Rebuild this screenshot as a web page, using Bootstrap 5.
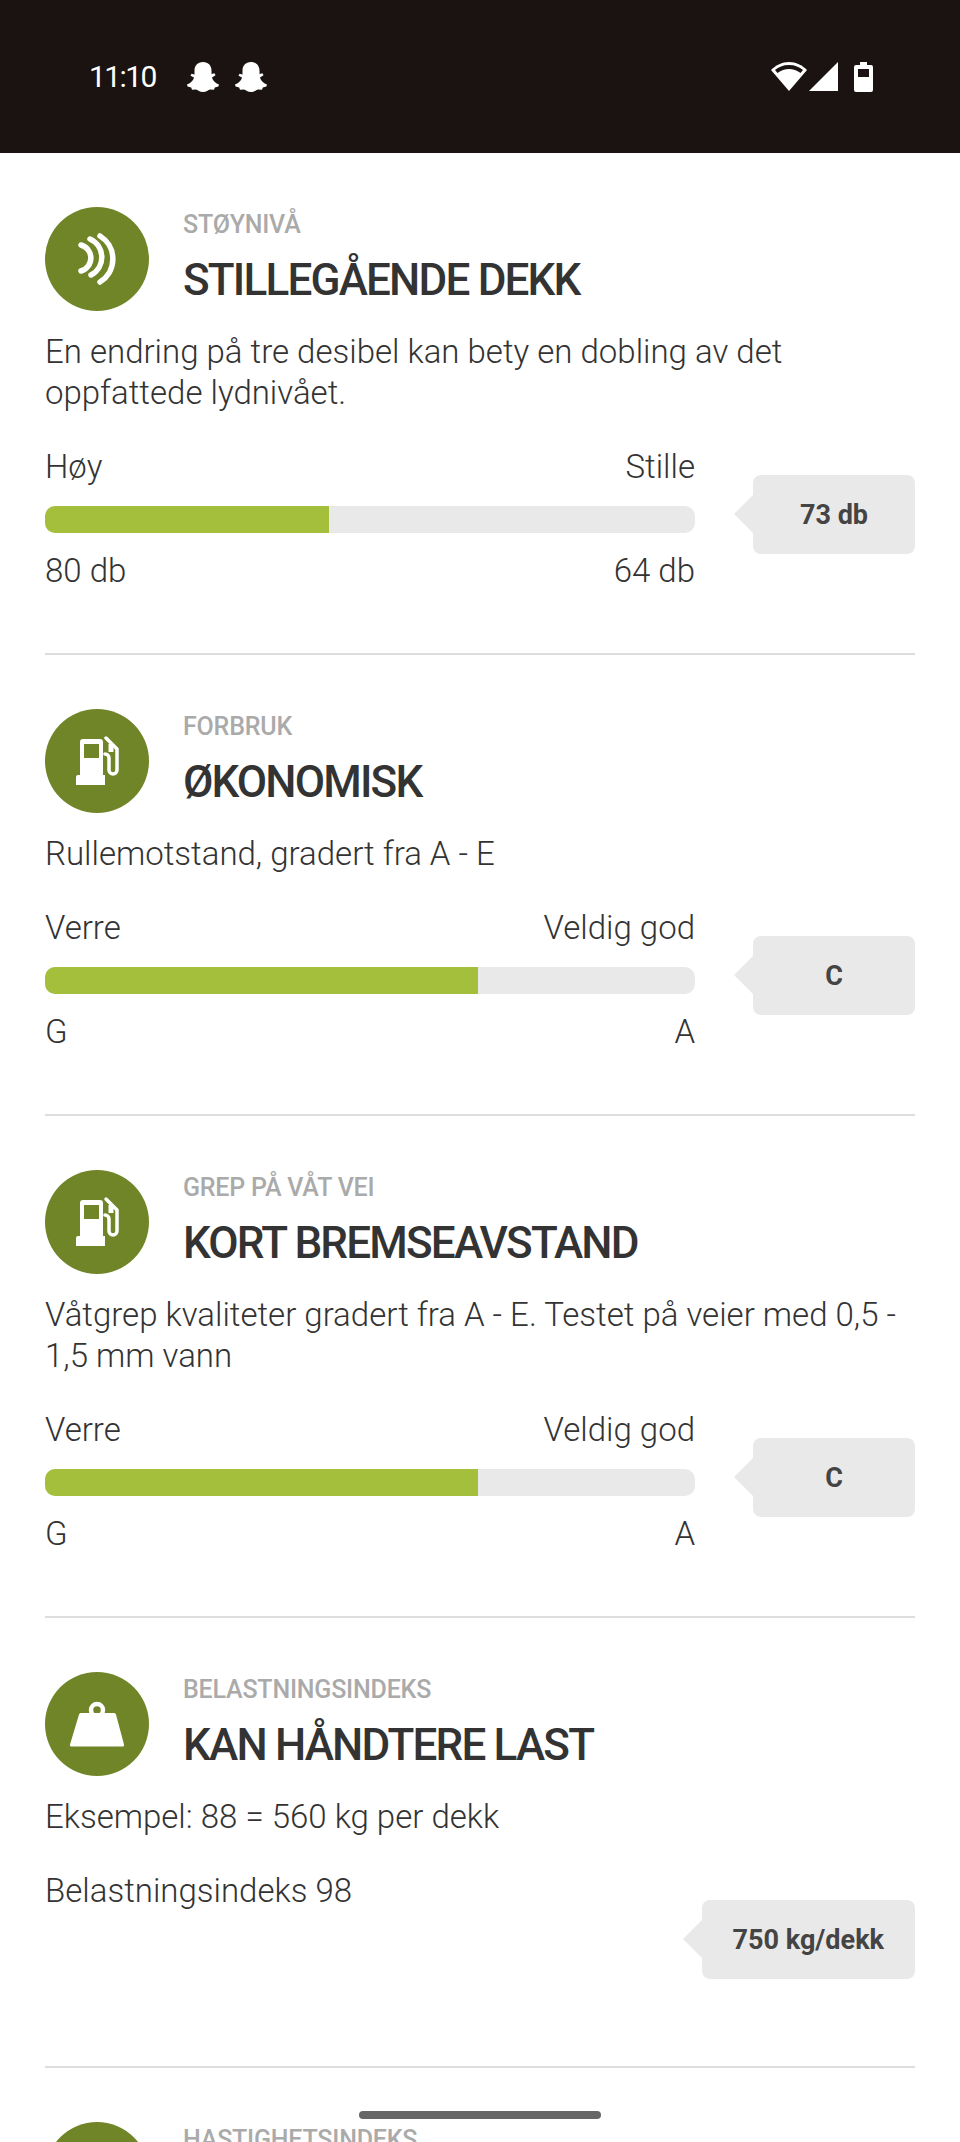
<!DOCTYPE html>
<html lang="no">
<head>
  <meta charset="UTF-8">
  <title>Dekk</title>
  <link href="https://cdn.jsdelivr.net/npm/bootstrap@5.3.0/dist/css/bootstrap.min.css" rel="stylesheet">
  <style>
    body {
      height: 2142px;
      overflow: hidden;
      position: relative;
      background-color: #fff;
      color: #333;
      font-family: Roboto, "Liberation Sans", sans-serif;
    }
    .status-bar {
      height: 153px;
      background-color: #1a1311;
      color: #fff;
      padding: 62px 87px 0 89px;
    }
    .status-time {
      font-size: 30px;
      line-height: 30px;
      width: 98px;
      letter-spacing: -1.6px;
    }
    .wifi-icon {
      margin-right: 2px;
    }
    .tyre-section {
      margin: 0 45px;
      padding: 54px 0 62px;
      border-bottom: 2px solid #ddd;
    }
    .tyre-section.last-one {
      height: 75px;
      overflow: hidden;
      border-bottom: 0;
    }
    .tyre-icon {
      width: 104px;
      height: 104px;
      flex-shrink: 0;
      margin-right: 34px;
    }
    .tyre-label {
      font-size: 25px;
      line-height: 30px;
      font-weight: 500;
      color: #aaa;
      margin-top: 3px;
      letter-spacing: -.2px;
    }
    .tyre-title {
      font-size: 44px;
      line-height: 50px;
      font-weight: 500;
      color: #333;
      margin: 15px 0 0;
      letter-spacing: -1.8px;
    }
    .tyre-text {
      font-size: 33px;
      line-height: 41px;
      font-weight: 300;
      margin: 20px 0 33px;
    }
    .tyre-scale {
      width: 650px;
      font-size: 33px;
      line-height: 41px;
      font-weight: 300;
    }
    .scale-track {
      height: 27px;
      border-radius: 10px;
      background-color: #e9e9e9;
      overflow: hidden;
      margin: 19px 0 17px;
    }
    .scale-fill {
      height: 100%;
      background-color: #a4bf3b;
    }
    .value-tag {
      position: relative;
      min-width: 162px;
      height: 79px;
      margin-top: 29px;
      padding: 0 31px;
      border-radius: 8px;
      background-color: #e9e9e9;
      font-size: 27px;
      font-weight: 700;
      line-height: 81px;
      text-align: center;
      color: #444;
    }
    .value-tag::before {
      content: "";
      position: absolute;
      left: -19px;
      top: 20px;
      border-style: solid;
      border-width: 19px 19px 19px 0;
      border-color: transparent #e9e9e9 transparent transparent;
    }
    .load-section {
      padding-bottom: 87px;
    }
    .load-text {
      font-size: 33px;
      line-height: 41px;
      font-weight: 300;
    }
    .load-section .value-tag {
      margin-top: 30px;
    }
    .home-pill {
      position: absolute;
      left: 359px;
      top: 2111px;
      width: 242px;
      height: 8px;
      border-radius: 4px;
      background-color: #666;
    }
  </style>
</head>
<body>
  <svg width="0" height="0" class="d-block">
    <symbol id="ghost" viewBox="0 0 32 30">
      <path fill="#fff" d="M16 0c5.500 0 8.500 4 8.500 8.500v3.500l3-.8 1 2-3.500 2.300c.8 3 3 5.500 7 7l-.6 2-3.600.9-.8 2.400-3.800-.3c-2 .5-4 2.500-7.200 2.500s-5.200-2-7.200-2.500l-3.800.3-.8-2.400-3.600-.9-.6-2c4-1.500 6.200-4 7-7L3.500 13.700l1-2 3 .8V8.500C7.500 4 10.500 0 16 0z"/>
    </symbol>
    <symbol id="pump" viewBox="0 0 104 104">
      <circle cx="52" cy="52" r="52" fill="#6f8527"/>
      <path fill="#fff" fill-rule="evenodd" d="M38 30h17a3 3 0 0 1 3 3v33h2v10H31V68a2 2 0 0 1 2-2h2V33a3 3 0 0 1 3-3zm1 5v14h15V35z"/>
      <path fill="none" stroke="#fff" stroke-width="3.500" stroke-linecap="round" stroke-linejoin="round" d="M60 45a4 4 0 0 1 4 4v12a4 4 0 0 0 8 0V40L61 29"/>
      <path fill="none" stroke="#fff" stroke-width="5" d="M66 35v8"/>
    </symbol>
    <symbol id="sound" viewBox="0 0 104 104">
      <circle cx="52" cy="52" r="52" fill="#6f8527"/>
      <g fill="none" stroke="#fff" stroke-width="5.500" stroke-linecap="round">
        <path d="M55 29A27 27 0 0 1 55 75"/>
        <path d="M45 32A20 20 0 0 1 46 68"/>
        <path d="M36 38A13.500 13.500 0 0 1 36 64"/>
      </g>
    </symbol>
    <symbol id="weight" viewBox="0 0 104 104">
      <circle cx="52" cy="52" r="52" fill="#6f8527"/>
      <circle cx="52" cy="38" r="6" fill="none" stroke="#fff" stroke-width="4.500"/>
      <path fill="#fff" d="M36 41h33a2 2 0 0 1 2 1.500l8 30a1.500 1.500 0 0 1-1.500 2h-51a1.500 1.500 0 0 1-1.500-2l9-30a2 2 0 0 1 2-1.500z"/>
    </symbol>
  </svg>

  <div class="status-bar d-flex align-items-start">
    <div class="status-time">11:10</div>
    <svg width="32" height="30" class="me-3"><use href="#ghost"/></svg>
    <svg width="32" height="30"><use href="#ghost"/></svg>
    <div class="ms-auto d-flex">
      <svg width="36" height="29" viewBox="0 0 36 29" class="wifi-icon">
        <path fill="#fff" d="M18 29 0 8C5 3 11 0 18 0s13 3 18 8z"/>
        <path fill="#1a1311" d="M18 3C12 3 7.500 5 4 8l2.500 3C10 8.500 14 7 18 7s8 1.500 11.500 4L32 8c-3.500-3-8-5-14-5z"/>
      </svg>
      <svg width="29" height="29" viewBox="0 0 29 29"><path fill="#fff" d="M29 0v29H0z"/></svg>
      <svg width="19" height="30" viewBox="0 0 19 30" class="ms-3">
        <path fill="#fff" fill-rule="evenodd" d="M6 0h7v3h4a2 2 0 0 1 2 2v23a2 2 0 0 1-2 2H2a2 2 0 0 1-2-2V5a2 2 0 0 1 2-2h4zM4 7v8h11V7z"/>
      </svg>
    </div>
  </div>

  <section class="tyre-section">
    <div class="d-flex">
      <svg class="tyre-icon"><use href="#sound"/></svg>
      <div>
        <div class="tyre-label">STØYNIVÅ</div>
        <h2 class="tyre-title">STILLEGÅENDE DEKK</h2>
      </div>
    </div>
    <p class="tyre-text">En endring på tre desibel kan bety en dobling av det oppfattede lydnivået.</p>
    <div class="d-flex justify-content-between align-items-start">
      <div class="tyre-scale">
        <div class="d-flex justify-content-between"><span>Høy</span><span>Stille</span></div>
        <div class="scale-track"><div class="scale-fill" style="width: 43.7%"></div></div>
        <div class="d-flex justify-content-between"><span>80 db</span><span>64 db</span></div>
      </div>
      <div class="value-tag">73 db</div>
    </div>
  </section>

  <section class="tyre-section">
    <div class="d-flex">
      <svg class="tyre-icon"><use href="#pump"/></svg>
      <div>
        <div class="tyre-label">FORBRUK</div>
        <h2 class="tyre-title">ØKONOMISK</h2>
      </div>
    </div>
    <p class="tyre-text">Rullemotstand, gradert fra A - E</p>
    <div class="d-flex justify-content-between align-items-start">
      <div class="tyre-scale">
        <div class="d-flex justify-content-between"><span>Verre</span><span>Veldig god</span></div>
        <div class="scale-track"><div class="scale-fill" style="width: 66.6%"></div></div>
        <div class="d-flex justify-content-between"><span>G</span><span>A</span></div>
      </div>
      <div class="value-tag">C</div>
    </div>
  </section>

  <section class="tyre-section">
    <div class="d-flex">
      <svg class="tyre-icon"><use href="#pump"/></svg>
      <div>
        <div class="tyre-label">GREP PÅ VÅT VEI</div>
        <h2 class="tyre-title">KORT BREMSEAVSTAND</h2>
      </div>
    </div>
    <p class="tyre-text">Våtgrep kvaliteter gradert fra A - E. Testet på veier med 0,5 - 1,5 mm vann</p>
    <div class="d-flex justify-content-between align-items-start">
      <div class="tyre-scale">
        <div class="d-flex justify-content-between"><span>Verre</span><span>Veldig god</span></div>
        <div class="scale-track"><div class="scale-fill" style="width: 66.6%"></div></div>
        <div class="d-flex justify-content-between"><span>G</span><span>A</span></div>
      </div>
      <div class="value-tag">C</div>
    </div>
  </section>

  <section class="tyre-section load-section">
    <div class="d-flex">
      <svg class="tyre-icon"><use href="#weight"/></svg>
      <div>
        <div class="tyre-label">BELASTNINGSINDEKS</div>
        <h2 class="tyre-title">KAN HÅNDTERE LAST</h2>
      </div>
    </div>
    <p class="tyre-text">Eksempel: 88 = 560 kg per dekk</p>
    <div class="d-flex justify-content-between align-items-start">
      <div class="load-text">Belastningsindeks 98</div>
      <div class="value-tag">750 kg/dekk</div>
    </div>
  </section>

  <section class="tyre-section last-one">
    <div class="d-flex">
      <svg class="tyre-icon"><use href="#sound"/></svg>
      <div>
        <div class="tyre-label">HASTIGHETSINDEKS</div>
      </div>
    </div>
  </section>

  <div class="home-pill"></div>
  <script src="https://cdn.jsdelivr.net/npm/bootstrap@5.3.0/dist/js/bootstrap.bundle.min.js"></script>
</body>
</html>
